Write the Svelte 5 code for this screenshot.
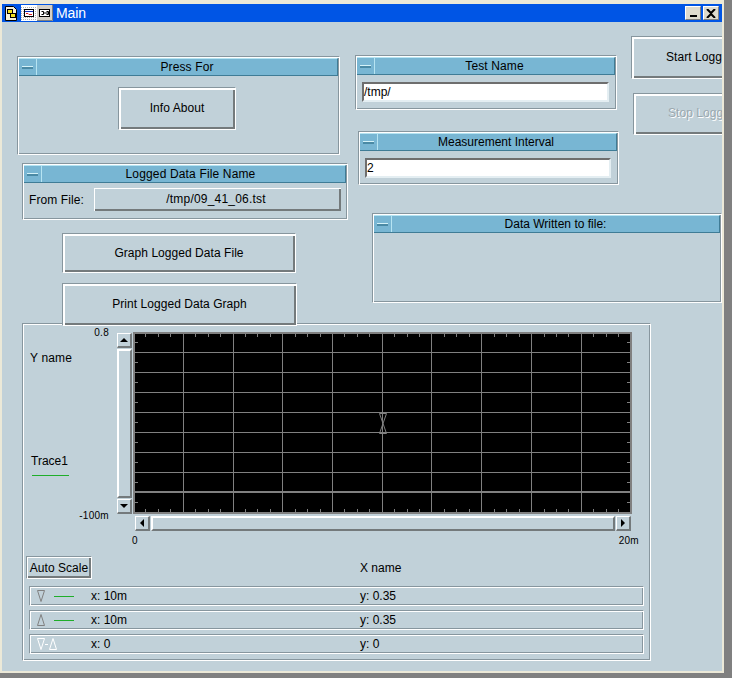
<script>
  // horizontal and vertical division lines of the plot
  const vGrid = [50, 100, 149, 199, 249, 298, 348, 398, 448];
  const hGrid = [20, 40, 60, 80, 100, 120, 140];
  const xTicks = [];
  for (let i = 0; i < 40; i++) {
    if (i % 4 !== 0) xTicks.push(Math.round(i * 12.44));
  }
  const yTicks = [10, 30, 50, 70, 90, 110, 130, 150, 170];

  const markers = [
    { id: 'top', x: '10m', y: '0.35' },
    { id: 'bottom', x: '10m', y: '0.35' },
    { id: 'delta', x: '0', y: '0' },
  ];
</script>

{#snippet titleBar(text)}
  <div class="panel-title">
    <span class="collapse"><i></i></span>
    <span class="panel-name">{text}</span>
  </div>
{/snippet}

<div class="window">
  <div class="titlebar">
    <div class="title-icons">
      <svg class="icon-doc" width="12" height="15" viewBox="0 0 12 15">
        <path d="M.5 .5h8l3 3v11H.5z" fill="#f4f0d8" stroke="#000" />
        <rect x="2.500" y="3.500" width="5" height="4" fill="#f0e020" stroke="#000" />
        <rect x="5.500" y="7.500" width="5" height="4" fill="#f0e020" stroke="#000" />
      </svg>
      <svg class="icon-btn" width="16" height="16" viewBox="0 0 16 16">
        <defs>
          <pattern id="dither" width="2" height="2" patternUnits="userSpaceOnUse">
            <rect width="2" height="2" fill="#fff" />
            <rect width="1" height="1" fill="#b0b0b0" />
          </pattern>
        </defs>
        <rect width="16" height="16" fill="url(#dither)" />
        <rect y="0" width="16" height="1" fill="#fff" />
        <rect x="3.500" y="4.500" width="9" height="7" fill="#fff" stroke="#000" />
        <path d="M4 6.500h8" stroke="#1030c0" />
        <path d="M5 8.500h2l1 1h3" fill="none" stroke="#e02020" />
      </svg>
      <svg class="icon-btn" width="16" height="16" viewBox="0 0 16 16">
        <rect width="16" height="16" fill="#d4d0c8" />
        <path d="M15.500 0v15.500H0" fill="none" stroke="#808080" />
        <rect x="2.500" y="4.500" width="10" height="7" fill="#fff" stroke="#000" />
        <path d="M4.500 6.500h2v3h-2M7 8h4M9.500 6.500h2v3h-2" fill="none" stroke="#000" />
      </svg>
    </div>
    <span class="title-text">Main</span>
    <div class="title-buttons">
      <span class="win-btn"><i class="min"></i></span>
      <span class="win-btn">
        <svg width="10" height="9" viewBox="0 0 10 9"><path d="M1 0l4 4 4-4M1 9l4-4 4 4" fill="none" stroke="#000" stroke-width="2" /></svg>
      </span>
    </div>
  </div>

  <div class="canvas">
    <section class="panel press-for">
      {@render titleBar('Press For')}
      <div class="panel-body center">
        <button class="btn info">Info About</button>
      </div>
    </section>

    <section class="panel test-name">
      {@render titleBar('Test Name')}
      <div class="panel-body"><div class="field">/tmp/</div></div>
    </section>

    <section class="panel interval">
      {@render titleBar('Measurement Interval')}
      <div class="panel-body"><div class="field">2</div></div>
    </section>

    <button class="btn start">Start Logging</button>
    <button class="btn stop" disabled>Stop Logging</button>

    <section class="panel logged">
      {@render titleBar('Logged Data File Name')}
      <div class="from-row">
        <span class="from-label">From File:</span>
        <button class="btn file">/tmp/09_41_06.tst</button>
      </div>
    </section>

    <section class="panel written">
      {@render titleBar('Data Written to file:')}
    </section>

    <button class="btn graph-btn">Graph Logged Data File</button>

    <section class="panel graph">
      <div class="y-side">
        <span class="y-max">0.8</span>
        <span class="y-name">Y name</span>
        <span class="trace-name">Trace1</span>
        <span class="trace-line"></span>
        <span class="y-min">-100m</span>
      </div>

      <div class="plot-row">
        <div class="vscroll">
          <span class="arrow-btn"><i class="tri up"></i></span>
          <span class="track"></span>
          <span class="arrow-btn"><i class="tri down"></i></span>
        </div>
        <svg class="plot" width="499" height="182" viewBox="0 0 499 182">
          <rect width="499" height="182" fill="#000" />
          <g stroke="#808080" fill="none" shape-rendering="crispEdges">
            {#each vGrid as x}
              <path d="M{x + 0.5} 0V182" />
            {/each}
            {#each hGrid as y}
              <path d="M0 {y + 0.5}H499" />
            {/each}
            <path d="M0 160H499" stroke-width="2" />
            {#each xTicks as x}
              <path d="M{x + 0.5} 0v5M{x + 0.5} 182v-5" />
            {/each}
            {#each yTicks as y}
              <path d="M0 {y + 0.5}h5M499 {y + 0.5}h-5" />
            {/each}
            <rect x="1" y="1" width="497" height="180" stroke-width="2" />
          </g>
          <path d="M246.500 81.500h7l-3.500 10 3.500 10h-7l3.500-10z" fill="none" stroke="#808080" />
        </svg>
      </div>

      <div class="hscroll">
        <span class="arrow-btn"><i class="tri left"></i></span>
        <span class="track"></span>
        <span class="arrow-btn"><i class="tri right"></i></span>
      </div>

      <div class="x-axis">
        <span>0</span>
        <span>20m</span>
      </div>

      <div class="scale-row">
        <button class="btn auto">Auto Scale</button>
        <span class="x-name">X name</span>
      </div>

      <div class="marker-list">
        {#each markers as m}
          <div class="marker">
            <span class="marker-key">
              {#if m.id === 'top'}
                <svg width="10" height="14" viewBox="0 0 10 14"><path d="M.5 1.500h7l-3.500 11z" fill="none" stroke="#808080" /></svg>
                <span class="marker-line"></span>
              {:else if m.id === 'bottom'}
                <svg width="10" height="14" viewBox="0 0 10 14"><path d="M.5 12.500h7l-3.500-11z" fill="none" stroke="#808080" /></svg>
                <span class="marker-line"></span>
              {:else}
                <svg width="20" height="14" viewBox="0 0 20 14">
                  <path d="M.5 1.500h7l-3.500 11zM12.500 12.500h7l-3.500-11z" fill="none" stroke="#fff" />
                  <path d="M8 7.500h3" stroke="#fff" />
                </svg>
              {/if}
            </span>
            <span class="marker-x">x: {m.x}</span>
            <span class="marker-y">y: {m.y}</span>
          </div>
        {/each}
      </div>
    </section>

    <button class="btn print-btn">Print Logged Data Graph</button>
  </div>
</div>

<style>
  :global(body) {
    margin: 0;
    background: #808080;
  }

  .window {
    width: 720px;
    height: 667px;
    padding: 4px 2px 2px 2px;
    background: #ece9d8;
    display: flex;
    flex-direction: column;
    font-family: "Liberation Sans", Arial, sans-serif;
    font-size: 12px;
    color: #000;
    overflow: hidden;
  }

  .titlebar {
    height: 18px;
    flex: none;
    background: #0055e5;
    display: flex;
    align-items: center;
    padding: 0 3px;
    color: #fff;
  }

  .title-icons {
    display: flex;
    align-items: center;
  }

  .icon-doc {
    margin-right: 4px;
  }

  .title-text {
    margin-left: 3px;
    font-size: 14px;
    letter-spacing: -0.1px;
  }

  .title-buttons {
    margin-left: auto;
    display: flex;
    gap: 2px;
  }

  .win-btn {
    width: 16px;
    height: 14px;
    box-sizing: border-box;
    background: #dedbce;
    border: 1px solid;
    border-color: #fff #808080 #808080 #fff;
    display: flex;
    align-items: center;
    justify-content: center;
  }

  .min {
    width: 7px;
    height: 2px;
    background: #000;
    margin-top: 6px;
  }

  .canvas {
    position: relative;
    flex: 1;
    background: #c1d1d9;
    overflow: hidden;
  }

  .panel {
    position: absolute;
    box-sizing: border-box;
    border: 1px solid;
    border-color: #87969e #fff #fff #87969e;
    box-shadow: inset 1px 1px 0 #fff, inset -1px -1px 0 #87969e;
    padding: 1px;
    display: flex;
    flex-direction: column;
  }

  .press-for { left: 15px; top: 34px; width: 323px; height: 99px; }
  .test-name { left: 353px; top: 33px; width: 262px; height: 55px; }
  .interval { left: 356px; top: 109px; width: 261px; height: 54px; }
  .logged { left: 20px; top: 141px; width: 326px; height: 57px; }
  .written { left: 370px; top: 191px; width: 350px; height: 90px; }
  .graph { left: 20px; top: 301px; width: 629px; height: 338px; padding: 8px 0 0 0; }

  .panel-title {
    display: flex;
    height: 18px;
    flex: none;
    box-sizing: border-box;
    background: #78b6d3;
    border-top: 1px solid #b6e4f2;
    border-bottom: 1px solid #3f7c96;
    border-right: 1px solid #3f7c96;
  }

  .collapse {
    width: 18px;
    flex: none;
    box-sizing: border-box;
    border-right: 1px solid #b6e4f2;
    display: flex;
    align-items: center;
    justify-content: center;
  }

  .collapse i {
    width: 11px;
    height: 3px;
    background: #4a8aa5;
    border-top: 1px solid #d4f2f8;
    box-sizing: border-box;
  }

  .panel-name {
    flex: 1;
    text-align: center;
    line-height: 17px;
    letter-spacing: 0.12px;
  }

  .logged .panel-name {
    padding-right: 6px;
    letter-spacing: 0.15px;
  }

  .interval .panel-name {
    padding-right: 2px;
    letter-spacing: 0;
  }

  .written .panel-name {
    letter-spacing: 0;
  }

  .panel-body {
    padding: 7px 6px 0 5px;
  }

  .center {
    display: flex;
    justify-content: center;
    padding: 11px 0 0;
  }

  .btn {
    display: block;
    box-sizing: border-box;
    margin: 0;
    padding: 0 0 2px;
    background: #c1d1d9;
    font: inherit;
    color: #000;
    letter-spacing: 0.05px;
    border: 1px solid;
    border-color: #87969e #fff #fff #87969e;
    box-shadow: inset 2px 2px 0 #fff, inset -2px -2px 0 #747a7c;
  }

  .btn:disabled {
    color: #9ba8af;
    text-shadow: 1px 1px 0 #fff;
  }

  .info { width: 118px; height: 43px; margin-right: 3px; }
  .start, .stop, .graph-btn, .print-btn { position: absolute; }
  .start { left: 629px; top: 14px; width: 130px; height: 43px; text-align: left; padding-left: 34px; }
  .stop { left: 631px; top: 71px; width: 130px; height: 42px; text-align: left; padding-left: 34px; }
  .graph-btn { left: 60px; top: 211px; width: 234px; height: 40px; padding-bottom: 0; }
  .print-btn { left: 60px; top: 261px; width: 235px; height: 43px; }

  .field {
    height: 20px;
    box-sizing: border-box;
    background: #fff;
    border: 2px solid;
    border-color: #6e6e6e #e4eef2 #e4eef2 #6e6e6e;
    line-height: 16px;
    white-space: nowrap;
  }

  .from-row {
    display: flex;
    align-items: center;
    padding: 5px 5px 0 5px;
  }

  .from-label {
    width: 65px;
    letter-spacing: 0.1px;
  }

  .file {
    flex: 1;
    height: 23px;
    border: none;
    letter-spacing: 0.2px;
    padding-right: 3px;
    box-shadow: inset 1px 1px 0 #fff, inset -2px -2px 0 #747a7c;
  }

  .y-side span {
    position: absolute;
    white-space: nowrap;
  }

  .y-max, .y-min, .x-axis {
    font-size: 10px;
    letter-spacing: 0.3px;
  }

  .y-max { right: 541px; top: 3px; }
  .y-min { right: 541px; top: 186px; }
  .y-name { left: 7px; top: 27px; letter-spacing: 0.15px; }
  .trace-name { left: 8px; top: 130px; }
  .trace-line { left: 9px; top: 151px; width: 37px; height: 1px; background: #1fae2a; }

  .plot-row {
    display: flex;
    padding-left: 94px;
    height: 182px;
    flex: none;
  }

  .plot {
    display: block;
    margin-left: 1px;
  }

  .vscroll {
    width: 15px;
    display: flex;
    flex-direction: column;
    gap: 1px;
    padding-top: 1px;
    box-sizing: border-box;
  }

  .hscroll {
    display: flex;
    gap: 1px;
    margin: 2px 0 0 112px;
    width: 496px;
    height: 15px;
  }

  .track, .arrow-btn {
    box-sizing: border-box;
    border: 1px solid;
    border-color: #fff #747a7c #747a7c #fff;
    border-width: 1px 2px 2px 1px;
    background: #c1d1d9;
  }

  .track {
    flex: 1;
    border-width: 2px;
  }

  .arrow-btn {
    flex: none;
    width: 15px;
    height: 15px;
    display: flex;
    align-items: center;
    justify-content: center;
  }

  .tri {
    width: 0;
    height: 0;
    border: 4px solid transparent;
  }

  .tri.up { border-bottom-color: #000; border-top-width: 0; }
  .tri.down { border-top-color: #000; border-bottom-width: 0; }
  .tri.left { border-right-color: #000; border-left-width: 0; }
  .tri.right { border-left-color: #000; border-right-width: 0; }

  .x-axis {
    display: flex;
    justify-content: space-between;
    margin: 4px 11px 0 109px;
    line-height: 12px;
  }

  .scale-row {
    display: flex;
    align-items: center;
    margin: 9px 0 0 3px;
    height: 23px;
  }

  .auto {
    width: 66px;
    height: 23px;
    padding-bottom: 0;
    box-shadow: inset 1px 1px 0 #fff, inset -2px -2px 0 #747a7c;
  }

  .x-name {
    margin-left: 268px;
  }

  .marker-list {
    display: flex;
    flex-direction: column;
    gap: 4px;
    margin: 7px 6px 0 6px;
  }

  .marker {
    height: 20px;
    box-sizing: border-box;
    display: flex;
    align-items: center;
    border: 1px solid;
    border-color: #87969e #fff #fff #87969e;
    box-shadow: inset 1px 1px 0 #fff, inset -1px -1px 0 #87969e;
  }

  .marker-key {
    width: 61px;
    padding-left: 7px;
    box-sizing: border-box;
    display: flex;
    align-items: center;
    gap: 7px;
  }

  .marker-line {
    width: 20px;
    height: 1px;
    background: #1fae2a;
  }

  .marker-x {
    width: 269px;
  }
</style>
